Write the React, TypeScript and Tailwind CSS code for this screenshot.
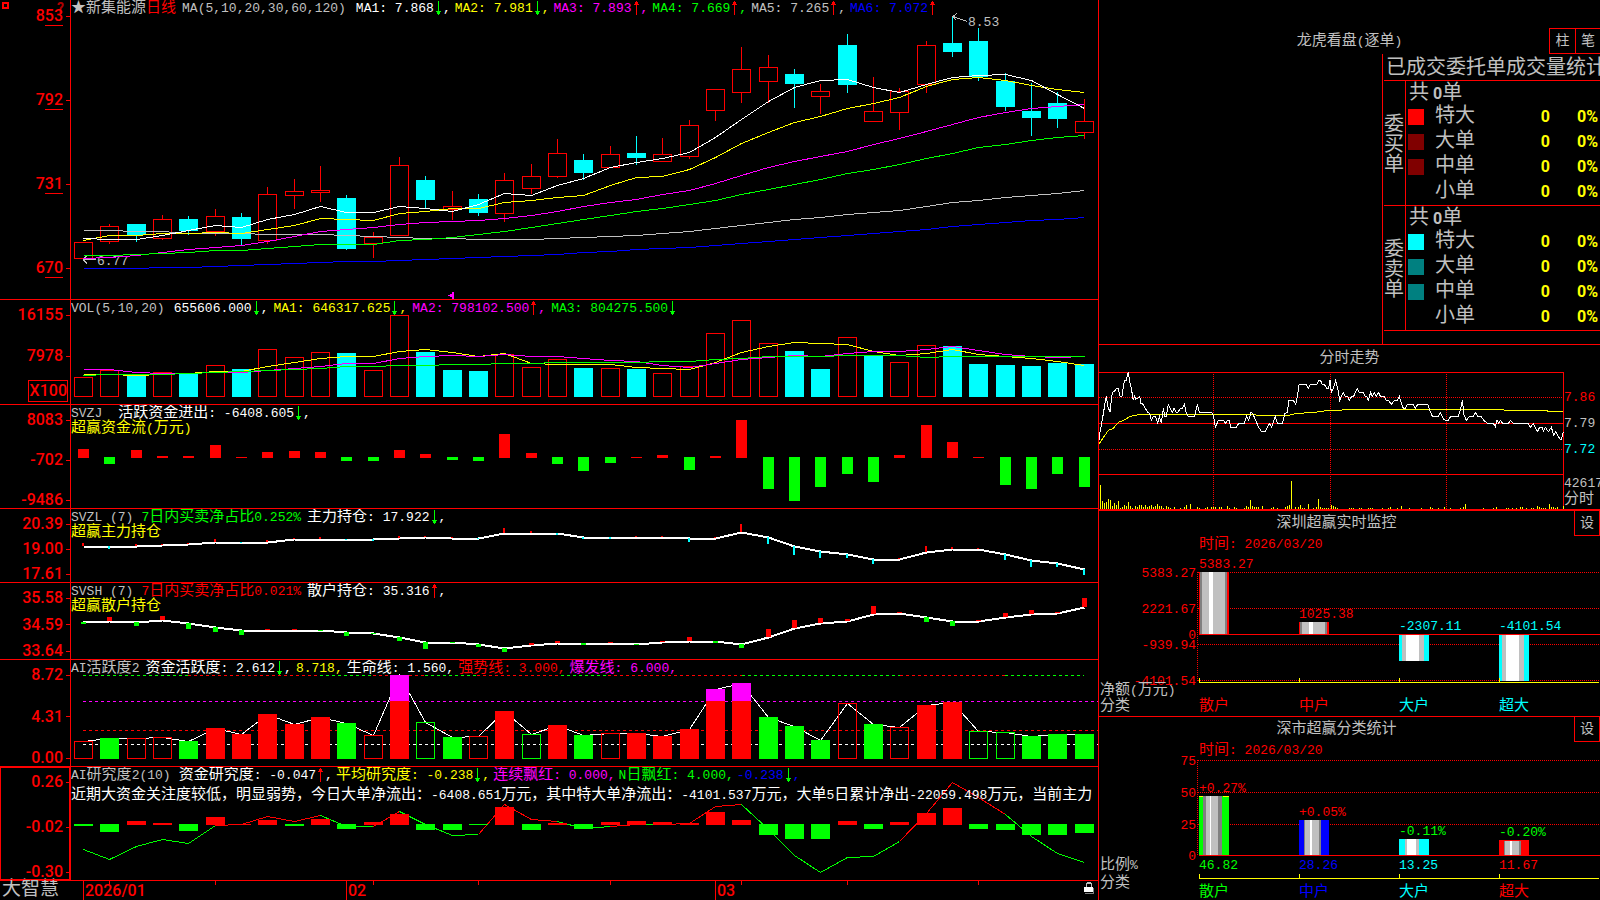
import { Fragment, type ReactNode } from 'react';

const RED = '#ff0000';
const GREEN = '#00ff00';
const CYAN = '#00ffff';
const MAGENTA = '#ff00ff';
const YELLOW = '#ffff00';
const WHITE = '#ffffff';
const SILVER = '#c0c0c0';
const GRAY = '#808080';
const BLUE = '#0000ff';

// x of the bar in the middle of each trading day
const dayX = (i: number) => Math.round(82.9 + i * 26.34);

// [body top, body bottom, high, low, up]
const candles = [
  [242, 258, 242, 258, 1], [226, 241, 224, 244, 1], [224, 235, 224, 242, 0], [219, 238, 215, 240, 1],
  [219, 231, 216, 235, 0], [216, 231, 209, 236, 1], [217, 239, 213, 245, 0], [194, 240, 187, 244, 1],
  [191, 195, 179, 209, 1], [190, 192, 166, 202, 1], [198, 249, 195, 250, 0], [237, 243, 232, 258, 1],
  [165, 235, 157, 235, 1], [180, 200, 176, 209, 0], [206, 209, 191, 220, 1], [199, 213, 194, 216, 0],
  [180, 213, 173, 222, 1], [176, 188, 164, 194, 1], [153, 176, 139, 178, 1], [160, 173, 154, 180, 0],
  [154, 167, 146, 167, 1], [153, 158, 136, 165, 0], [154, 161, 138, 162, 1], [125, 156, 120, 159, 1],
  [89, 110, 89, 121, 1], [69, 92, 47, 103, 1], [67, 81, 55, 103, 1], [74, 84, 69, 108, 0],
  [91, 96, 84, 114, 1], [45, 85, 34, 93, 0], [111, 121, 77, 122, 1], [91, 112, 88, 130, 1],
  [45, 84, 41, 93, 1], [43, 52, 17, 57, 0], [41, 77, 28, 81, 0], [81, 107, 73, 111, 0],
  [111, 118, 83, 136, 0], [103, 119, 92, 128, 0], [121, 132, 99, 139, 1],
];

const priceLines = [
  { color: BLUE, ys: [268, 268, 268, 267, 267, 266, 265, 264, 263, 262, 261, 261, 260, 259, 258, 257, 256, 255, 254, 252, 251, 249, 248, 247, 245, 243, 241, 239, 237, 235, 233, 231, 229, 226, 224, 222, 220, 219, 217] },
  { color: SILVER, ys: [230, 230, 231, 231, 233, 233, 233, 234, 234, 234, 235, 236, 237, 238, 238, 239, 239, 239, 238, 237, 236, 235, 233, 231, 228, 225, 222, 219, 217, 214, 212, 210, 206, 202, 200, 197, 195, 193, 190] },
  { color: MAGENTA, ys: [258, 257, 255, 252, 249, 247, 245, 241, 236, 231, 229, 227, 224, 222, 221, 220, 218, 215, 211, 206, 202, 199, 194, 190, 183, 175, 167, 161, 156, 151, 144, 138, 131, 124, 117, 112, 108, 106, 104] },
  { color: GREEN, ys: [255, 255, 254, 253, 252, 250, 250, 248, 246, 244, 244, 244, 240, 239, 237, 234, 231, 227, 223, 219, 215, 211, 208, 204, 200, 194, 189, 184, 179, 173, 169, 164, 158, 153, 147, 144, 140, 137, 135] },
  { color: YELLOW, ys: [240, 235, 235, 233, 233, 232, 233, 229, 225, 218, 219, 220, 213, 211, 208, 208, 202, 200, 197, 195, 185, 177, 176, 169, 157, 143, 132, 122, 116, 108, 103, 97, 86, 79, 77, 80, 85, 89, 92] },
  { color: WHITE, ys: [238, 239, 239, 235, 230, 225, 227, 219, 214, 206, 212, 212, 206, 208, 211, 204, 193, 195, 185, 178, 167, 162, 158, 152, 137, 119, 101, 87, 80, 79, 87, 92, 84, 77, 75, 74, 80, 94, 108] },
];

const volumes = [377, 370, 375, 372, 373, 365, 369, 349, 357, 352, 353, 370, 315, 352, 370, 371, 354, 367, 359, 368, 368, 369, 373, 366, 333, 320, 343, 351, 369, 337, 356, 362, 345, 346, 364, 365, 366, 363, 364];
const volumeUp = '110101011101100011101011111001011000000';

const volumeLines = [
  { color: YELLOW, ys: [374, 374, 375, 374, 373, 371, 371, 366, 362, 358, 356, 356, 351, 349, 352, 356, 353, 363, 364, 364, 364, 367, 368, 369, 362, 352, 346, 342, 343, 344, 351, 355, 353, 349, 354, 356, 358, 361, 365] },
  { color: MAGENTA, ys: [369, 369, 372, 373, 373, 372, 372, 370, 368, 366, 363, 363, 358, 356, 355, 356, 354, 356, 356, 358, 360, 361, 365, 367, 363, 359, 357, 355, 356, 353, 351, 351, 349, 346, 350, 354, 356, 357, 356] },
  { color: GREEN, ys: [375, 374, 374, 374, 373, 372, 371, 370, 369, 368, 366, 366, 365, 365, 364, 364, 363, 363, 362, 362, 362, 362, 361, 361, 359, 358, 356, 356, 356, 355, 355, 355, 357, 356, 356, 356, 356, 356, 356] },
];

const flows = [449, 464, 450, 456, 456, 445, 457, 452, 451, 452, 461, 461, 450, 454, 460, 461, 434, 453, 464, 471, 463, 457, 455, 470, 456, 420, 489, 501, 487, 474, 482, 455, 425, 442, 457, 485, 489, 474, 487];

const mainHold = [546, 546, 546, 545, 544, 542, 542, 542, 539, 539, 539, 539, 538, 537, 538, 538, 533, 533, 533, 537, 537, 537, 537, 538, 538, 532, 537, 546, 551, 554, 559, 559, 552, 549, 549, 554, 560, 563, 569];
const mainTicks = [543, 549, 544, 544, 543, 539, 542, 540, 538, 537, 540, 541, 536, 536, 537, 539, 528, 531, 535, 539, 539, 536, 536, 542, 537, 524, 544, 555, 558, 558, 564, 558, 546, 547, 548, 560, 567, 567, 575];

const retailHold = [622, 621, 622, 620, 623, 627, 630, 630, 630, 630, 632, 633, 637, 642, 642, 644, 648, 645, 643, 643, 643, 644, 642, 641, 641, 644, 637, 628, 623, 621, 614, 613, 617, 621, 621, 617, 614, 613, 607];
const retailTicks = [624, 617, 626, 616, 629, 632, 635, 629, 629, 631, 636, 634, 641, 649, 643, 647, 652, 643, 641, 645, 642, 645, 641, 637, 643, 648, 629, 620, 618, 619, 606, 612, 622, 626, 620, 613, 610, 612, 598];

const activity = [741, 738, 738, 737, 741, 728, 734, 714, 724, 717, 723, 735, 675, 722, 737, 736, 711, 734, 725, 735, 733, 733, 736, 729, 689, 683, 717, 726, 740, 703, 724, 727, 705, 702, 731, 732, 736, 734, 734];
// R/G filled, r/g hollow, M red with a magenta top
const activityKind = 'rGrrGRRRRRGrMgGrRgRGrRRRMMGGGrGrRRggGGG';
const topDashes: [number, number, string][] = [
  [83, 188, GREEN], [188, 320, RED], [320, 373, GREEN], [373, 425, RED], [425, 477, GREEN], [477, 561, RED],
  [561, 608, GREEN], [608, 742, RED], [742, 900, GREEN], [900, 1005, RED], [1005, 1084, GREEN],
];

const research = [826, 832, 821, 823, 831, 817, 824, 820, 826, 819, 829, 822, 814, 830, 830, 825, 807, 830, 823, 829, 822, 821, 822, 823, 812, 820, 835, 839, 839, 821, 829, 822, 813, 808, 829, 830, 835, 835, 833];
const researchLine = [849, 859, 846, 839, 843, 825, 824, 816, 821, 815, 826, 826, 811, 824, 835, 834, 804, 819, 821, 828, 826, 824, 824, 823, 806, 804, 829, 855, 872, 857, 856, 841, 813, 782, 797, 814, 836, 853, 862];
const researchSeg = 'GGGGGRRRRGGRGGGRRRGGRGRRRGGGGGGRRRRGGG';

const isCjk = /([\u3000-\u9fff\uff00-\uffef★]+)/;

/** Chinese runs at 15px, everything else in the half-width face. */
function Mixed({ children }: { children: string }) {
  return (
    <>
      {children.split(isCjk).map((run, i) =>
        i % 2 ? (
          <span key={i} className="text-[15px]">{run}</span>
        ) : (
          <span key={i} className="text-[13px]">{run}</span>
        )
      )}
    </>
  );
}

function Arrow({ up }: { up: boolean }) {
  return up ? (
    <svg viewBox="0 0 9 15" className="h-[15px] w-[9px] shrink-0" shapeRendering="crispEdges">
      <path d="M4 0h1v14h-1zM3 1h3v2h-3zM2 3h5v1h-5z" fill={RED} />
    </svg>
  ) : (
    <svg viewBox="0 0 9 15" className="h-[15px] w-[9px] shrink-0" shapeRendering="crispEdges">
      <path d="M4 0h1v14h-1zM3 11h3v2h-3zM2 10h5v1h-5z" fill={GREEN} />
    </svg>
  );
}

function Item({ color, text, dir, end = ',' }: { color: string; text: string; dir?: 'up' | 'down'; end?: string }) {
  return (
    <span className={`flex shrink-0 ${color}`}>
      <span><Mixed>{text}</Mixed></span>
      {dir && <Arrow up={dir === 'up'} />}
      <span><Mixed>{end}</Mixed></span>
    </span>
  );
}

function AxisLabel({ text, underline }: { text: string; underline?: boolean }) {
  return (
    <div className="flex h-4 items-center justify-end">
      <span className="relative leading-4">
        {text}
        {underline && <span className="absolute right-0 -bottom-0.5 h-px w-[18px] bg-[#ff0000]" />}
      </span>
      <span className="ml-[3px] h-px w-1 bg-[#ff0000]" />
    </div>
  );
}

type PanelProps = {
  viewBox: string;
  labels?: string[];
  axis?: ReactNode;
  axisClass?: string;
  header: ReactNode;
  children: ReactNode;
};

function Panel({ viewBox, labels, axis, axisClass = 'pt-[7px]', header, children }: PanelProps) {
  return (
    <section className="flex min-h-0 border-b border-[#ff0000]">
      <div className={`relative flex w-[71px] shrink-0 flex-col justify-between border-r border-[#ff0000] font-[Roboto,sans-serif] text-[16px] font-medium text-[#ff0000] ${axisClass}`}>
        {axis ?? labels?.map((l) => <AxisLabel key={l} text={l} />)}
      </div>
      <div className="relative min-w-0 flex-1 overflow-hidden">
        <svg className="absolute inset-0 size-full" viewBox={viewBox} preserveAspectRatio="none" shapeRendering="crispEdges">
          {children}
        </svg>
        <div className="relative pt-px leading-[15px] whitespace-pre">{header}</div>
      </div>
    </section>
  );
}

function DayLine({ ys, color, width = 1 }: { ys: number[]; color: string; width?: number }) {
  const points = ys.map((y, i) => `${dayX(i) + 0.5},${y + 0.5}`).join(' ');
  return <polyline points={points} fill="none" stroke={color} strokeWidth={width} />;
}

function Box({ i, top, bottom, fill, stroke }: { i: number; top: number; bottom: number; fill?: string; stroke?: string }) {
  const x = dayX(i) - 9;
  return fill ? (
    <rect x={x} y={top} width={19} height={bottom - top} fill={fill} />
  ) : (
    <rect x={x + 0.5} y={top + 0.5} width={18} height={bottom - top - 1} fill="none" stroke={stroke} />
  );
}

function PricePanel() {
  return (
    <Panel
      viewBox="71 0 1027 299"
      axisClass="pt-2 pb-[23px]"
      axis={
        <>
          <svg viewBox="0 0 8 8" className="absolute top-0.5 left-0.5 size-2" shapeRendering="crispEdges">
            <path d="M0 0h7v7h-7zM2 2v3h3v-3z" fill={RED} fillRule="evenodd" />
          </svg>
          <span className="absolute top-0 left-[57px] text-[14px] leading-4 font-bold text-[#b00000]">?</span>
          {['853', '792', '731', '670'].map((l) => <AxisLabel key={l} text={l} underline />)}
        </>
      }
      header={
        <div className="flex gap-1 text-[#c0c0c0]">
          <span className="mr-0.5"><Mixed>★新集能源</Mixed><span className="text-[#ff0000]"><Mixed>日线</Mixed></span></span>
          <span className="mr-1.5"><Mixed>MA(5,10,20,30,60,120)</Mixed></span>
          <Item color="text-white" text="MA1: 7.868" dir="down" />
          <Item color="text-[#ffff00]" text="MA2: 7.981" dir="down" />
          <Item color="text-[#ff00ff]" text="MA3: 7.893" dir="up" />
          <Item color="text-[#00ff00]" text="MA4: 7.669" dir="up" />
          <Item color="text-[#c0c0c0]" text="MA5: 7.265" dir="up" />
          <Item color="text-[#0000ff]" text="MA6: 7.072" dir="up" end="" />
        </div>
      }
    >
      {candles.map(([top, bottom, high, low, up], i) => {
        const x = dayX(i);
        const color = up ? RED : CYAN;
        return (
          <g key={i}>
            <path d={`M${x + 0.5} ${high}V${top}M${x + 0.5} ${bottom}V${low}`} stroke={color} />
            <Box i={i} top={top} bottom={bottom + (up ? 1 : 0)} fill={up ? undefined : CYAN} stroke={RED} />
          </g>
        );
      })}
      <text x={97} y={265} fontSize={13} fill={SILVER}>6.77</text>
      <path d="M83 259.5H96M83 259.5l4 -4M83 259.5l4 4" stroke={SILVER} fill="none" />
      {priceLines.map((l) => <DayLine key={l.color} {...l} />)}
      <text x={968} y={26} fontSize={13} fill={SILVER}>8.53</text>
      <path d="M953 16.5L967 21.5M957 13L953 16.5L956 20" stroke={SILVER} fill="none" />
      <path d="M454 292v7h-2v-2h-2v-1h-2v-1h2v-1h2v-2z" fill={MAGENTA} />
    </Panel>
  );
}

function VolumePanel() {
  return (
    <Panel
      viewBox="71 300 1027 104"
      axis={
        <>
          <AxisLabel text="16155" />
          <div className="mt-[25px] mb-auto"><AxisLabel text="7978" /></div>
          <div className="mr-0.5 mb-0.5 flex h-[22px] w-10 items-center justify-end self-end border border-[#ff0000]">X100</div>
        </>
      }
      header={
        <div className="flex gap-[5px] text-[#c0c0c0]">
          <span className="mr-1"><Mixed>VOL(5,10,20)</Mixed></span>
          <Item color="text-white" text="655606.000" dir="down" />
          <Item color="text-[#ffff00]" text="MA1: 646317.625" dir="down" />
          <Item color="text-[#ff00ff]" text="MA2: 798102.500" dir="up" />
          <Item color="text-[#00ff00]" text="MA3: 804275.500" dir="down" end="" />
        </div>
      }
    >
      {volumes.map((top, i) => (
        <Box key={i} i={i} top={top} bottom={397} fill={volumeUp[i] === '1' ? undefined : CYAN} stroke={RED} />
      ))}
      {volumeLines.map((l) => <DayLine key={l.color} {...l} />)}
    </Panel>
  );
}

function FlowPanel() {
  return (
    <Panel
      viewBox="71 405 1027 103"
      labels={['8083', '-702', '-9486']}
      header={
        <>
          <div className="flex gap-4 text-[#c0c0c0]">
            <span><Mixed>SVZJ</Mixed></span>
            <Item color="text-white" text="活跃资金进出: -6408.605" dir="down" />
          </div>
          <div className="text-[#ffff00]"><Mixed>超赢资金流(万元)</Mixed></div>
        </>
      }
    >
      {flows.map((y, i) =>
        y < 458 ? (
          <rect key={i} x={dayX(i) - 5} y={y} width={11} height={458 - y} fill={RED} />
        ) : (
          <rect key={i} x={dayX(i) - 5} y={457} width={11} height={y - 457} fill={GREEN} />
        )
      )}
    </Panel>
  );
}

type HoldProps = {
  viewBox: string;
  labels: string[];
  code: string;
  ratio: ReactNode;
  item: ReactNode;
  caption: string;
  line: number[];
  ticks: number[];
  tickWidth: number;
  down: string;
};

function HoldPanel({ viewBox, labels, code, ratio, item, caption, line, ticks, tickWidth, down }: HoldProps) {
  return (
    <Panel
      viewBox={viewBox}
      labels={labels}
      header={
        <>
          <div className="flex gap-1.5 text-[#c0c0c0]">
            <span className="mr-0.5"><Mixed>{code}</Mixed></span>
            {ratio}
            {item}
          </div>
          <div className="text-[#ffff00]"><Mixed>{caption}</Mixed></div>
        </>
      }
    >
      <DayLine ys={line} color={WHITE} width={2} />
      {ticks.map((y, i) => (
        <rect
          key={i}
          x={dayX(i) - Math.floor(tickWidth / 2)}
          y={Math.min(y, line[i])}
          width={tickWidth}
          height={Math.max(1, Math.abs(y - line[i]))}
          fill={y < line[i] ? RED : down}
        />
      ))}
    </Panel>
  );
}

function ActivityPanel() {
  return (
    <Panel
      viewBox="71 660 1027 106"
      labels={['8.72', '4.31', '0.00']}
      header={
        <div className="flex gap-1 text-[#c0c0c0]">
          <span className="mr-0.5"><Mixed>AI活跃度2</Mixed></span>
          <Item color="text-white" text="资金活跃度: 2.612" dir="down" />
          <Item color="text-[#ffff00]" text="8.718" />
          <Item color="text-white" text="生命线: 1.560" />
          <Item color="text-[#ff0000]" text="强势线: 3.000" />
          <Item color="text-[#ff00ff]" text="爆发线: 6.000" />
        </div>
      }
    >
      {topDashes.map(([a, b, c]) => (
        <path key={a} d={`M${a} 675.5H${b}`} stroke={c} strokeDasharray="3 3" />
      ))}
      <path d="M83 701.5H1098" stroke={MAGENTA} strokeDasharray="3 3" />
      <path d="M83 730.5H1098" stroke={RED} strokeDasharray="3 3" />
      <path d="M83 744.5H1098" stroke={WHITE} strokeDasharray="3 3" />
      <DayLine ys={activity} color={WHITE} />
      {activity.map((top, i) => {
        const kind = activityKind[i];
        if (kind === 'r' || kind === 'g') {
          return <Box key={i} i={i} top={top} bottom={759} stroke={kind === 'r' ? RED : GREEN} />;
        }
        return (
          <Fragment key={i}>
            <Box i={i} top={top} bottom={759} fill={kind === 'G' ? GREEN : RED} />
            {kind === 'M' && <Box i={i} top={top} bottom={701} fill={MAGENTA} />}
          </Fragment>
        );
      })}
    </Panel>
  );
}

function ResearchPanel() {
  return (
    <Panel
      viewBox="71 767 1027 113"
      labels={['0.26', '-0.02', '-0.30']}
      axisClass="pt-[7px] shadow-[inset_0_0_0_1px_#ff0000]"
      header={
        <>
          <div className="flex gap-[3px] text-[#c0c0c0]">
            <span className="mr-[5px]"><Mixed>AI研究度2(10)</Mixed></span>
            <Item color="text-white" text="资金研究度: -0.047" dir="up" />
            <Item color="text-[#ffff00]" text="平均研究度: -0.238" dir="down" />
            <Item color="text-[#ff00ff]" text="连续飘红: 0.000" />
            <Item color="text-[#00ff00]" text="N日飘红: 4.000" />
            <Item color="text-[#0000ff]" text="-0.238" dir="down" />
          </div>
          <p className="mt-[5px] text-white">
            <Mixed>近期大资金关注度较低，明显弱势，今日大单净流出：-6408.651万元，其中特大单净流出：-4101.537万元，大单5日累计净出-22059.498万元，当前主力</Mixed>
          </p>
        </>
      }
    >
      {researchSeg.split('').map((c, i) => (
        <path
          key={i}
          d={`M${dayX(i) + 0.5} ${researchLine[i] + 0.5}L${dayX(i + 1) + 0.5} ${researchLine[i + 1] + 0.5}`}
          stroke={c === 'R' ? RED : GREEN}
        />
      ))}
      {research.map((y, i) =>
        y < 825 ? (
          <Box key={i} i={i} top={y} bottom={825} fill={RED} />
        ) : (
          <Box key={i} i={i} top={824} bottom={Math.max(y, 825)} fill={GREEN} />
        )
      )}
    </Panel>
  );
}

function DateAxis() {
  return (
    <div className="flex min-h-0 text-[#c0c0c0]">
      <div className="w-[71px] shrink-0 pl-0.5 text-[19px] leading-[19px] whitespace-nowrap">大智慧</div>
      <div className="relative flex-1">
        <svg className="absolute inset-0 size-full" viewBox="71 881 1027 19" preserveAspectRatio="none" shapeRendering="crispEdges">
          {[0, 10, 24].map((i) => <rect key={i} x={dayX(i)} y={881} width={1} height={19} fill={RED} />)}
          {[1, 5, 11, 15, 20, 25, 29, 34].map((i) => <rect key={i} x={dayX(i)} y={881} width={1} height={4} fill={RED} />)}
        </svg>
        {/* column shares follow the day positions of the month ticks */}
        <div className="relative grid h-full grid-cols-[14fr_263fr_369fr_381fr] font-[Roboto,sans-serif] text-[16px] leading-[19px] font-medium text-[#ff0000]">
          <span />
          <span>2026/01</span>
          <span>02</span>
          <span className="flex justify-between">
            03
            <svg viewBox="0 0 10 12" className="mt-px mr-1 h-3 w-2.5" shapeRendering="crispEdges">
              <path d="M2 5V1h1V0h4v1h1v4h-1V2H3v3z" fill={SILVER} />
              <path d="M9 6h1v6H1v-1h8z" fill={GRAY} />
              <path d="M0 5h9v5H0z" fill={WHITE} />
            </svg>
          </span>
        </div>
      </div>
    </div>
  );
}

function Square({ color }: { color: string }) {
  return <span className={`block size-4 ${color}`} />;
}

function OrderTable({ side, swatches }: { side: string[]; swatches: string[] }) {
  return (
    <div className="flex h-[125px] border-b border-[#ff0000]">
      <div className="flex w-[22px] flex-col justify-center border-r border-[#ff0000] pt-1.5 leading-5">
        {side.map((c) => <span key={c}>{c}</span>)}
      </div>
      <table className="flex-1 self-start">
        <caption className="h-[23px] pl-[3px] text-left leading-[25px]">
          共<span className="ml-1 font-[Roboto,sans-serif] text-[16px] font-bold">0</span>单
        </caption>
        <tbody>
          {['特大', '大单', '中单', '小单'].map((name, i) => (
            <tr key={name} className="h-[25px] leading-[25px]">
              <td className="w-[29px] pl-0.5"><Square color={swatches[i]} /></td>
              <th className="w-10 text-left font-normal whitespace-nowrap" scope="row">{name}</th>
              <td className="text-right font-[Roboto,sans-serif] text-[16px] font-bold text-[#ffff00]">0</td>
              <td className="w-[50px] pr-0.5 text-right font-[Roboto,sans-serif] text-[16px] font-bold text-[#ffff00]">0%</td>
            </tr>
          ))}
        </tbody>
      </table>
    </div>
  );
}

function OrdersPanel() {
  return (
    <section className="flex min-h-0 flex-col border-b border-[#ff0000]">
      <div className="mt-7 grid h-[26px] shrink-0 grid-cols-[1fr_auto_1fr]">
        <h2 className="col-start-2 leading-[28px]"><Mixed>龙虎看盘(逐单)</Mixed></h2>
        <div className="flex justify-self-end text-[14px]">
          <button className="h-[26px] w-[26px] border border-r-0 border-[#ff0000]">柱</button>
          <button className="h-[26px] w-[25px] border border-r-0 border-[#ff0000]">笔</button>
        </div>
      </div>
      <div className="w-[218px] flex-1 self-end overflow-hidden border-l border-[#ff0000] pl-px text-[20px]">
        <h3 className="h-[27px] border-b border-[#ff0000] pl-0.5 leading-[29px] whitespace-nowrap">已成交委托单成交量统计</h3>
        <OrderTable side={['委', '买', '单']} swatches={['bg-[#ff0000]', 'bg-[#800000]', 'bg-[#800000]', 'bg-black']} />
        <OrderTable side={['委', '卖', '单']} swatches={['bg-[#00ffff]', 'bg-[#008080]', 'bg-[#008080]', 'bg-black']} />
      </div>
    </section>
  );
}

// intraday curve, three units to a pixel
const intraday =
  '27,315 30,290 35,265 41,230 45,205 49,184 54,215 60,232 64,195 67,172 73,170 79,160 85,160 90,184 96,184 100,155 103,137 108,137 115,112 119,140 124,160 130,196 134,184 137,193 143,190 149,184 153,205 160,208 166,220 173,232 179,235 184,256 190,244 196,244 203,265 208,244 214,265 220,220 224,244 229,244 235,208 241,220 247,232 252,220 259,232 264,232 271,220 277,220 283,208 289,235 295,244 314,244 322,208 328,232 365,232 371,245 376,277 385,256 401,256 407,265 413,256 418,256 422,277 439,277 446,265 463,265 470,244 476,256 483,232 488,235 497,256 505,275 515,290 526,290 538,265 545,277 556,244 562,265 577,265 585,235 592,232 597,196 610,196 617,208 622,184 627,150 649,148 655,160 661,148 680,148 686,136 692,137 697,148 703,148 711,160 716,160 720,136 724,172 730,160 737,137 743,160 749,196 760,172 766,184 773,184 778,196 785,184 791,184 802,160 808,172 820,172 826,184 830,184 835,196 842,172 847,184 853,172 859,184 866,172 871,184 883,184 888,196 895,196 904,208 913,196 922,196 928,184 934,205 940,220 946,220 952,208 970,208 976,220 983,208 1013,208 1019,225 1027,244 1045,244 1051,232 1061,253 1068,256 1075,256 1082,244 1105,244 1111,225 1117,196 1122,240 1129,256 1138,244 1150,244 1157,232 1163,244 1173,244 1181,256 1193,265 1210,265 1216,275 1221,256 1226,265 1232,256 1238,265 1255,265 1262,256 1270,265 1314,265 1322,277 1330,265 1342,290 1349,277 1356,277 1360,288 1366,277 1375,290 1384,277 1391,300 1397,290 1410,313 1414,313 1420,291';
const average =
  '27,327 40,308 55,286 70,280 85,262 100,257 120,244 145,239 490,239 505,241 598,241 615,236 680,231 715,226 800,224 1240,224 1245,226 1368,226 1375,229 1420,230';
const ticks = [
  [31, 450], [37, 498], [43, 504], [49, 501], [55, 492], [61, 495], [67, 513], [73, 504], [79, 510], [85, 498], [91, 518],
  [97, 516], [103, 510], [109, 513], [115, 501], [121, 513], [127, 518], [136, 513], [142, 516], [148, 510], [154, 510],
  [160, 516], [166, 510], [172, 516], [178, 513], [184, 510], [190, 516], [196, 513], [202, 507], [208, 513], [214, 513],
  [220, 518], [229, 513], [235, 516], [241, 518], [253, 516], [271, 518], [283, 516], [289, 510], [301, 507], [322, 516],
  [328, 518], [346, 518], [352, 516], [364, 516], [370, 516], [376, 516], [388, 516], [394, 516], [412, 513], [418, 518],
  [433, 516], [439, 518], [463, 518], [469, 513], [475, 516], [481, 495], [487, 513], [493, 516], [499, 516], [505, 516],
  [517, 513], [544, 518], [550, 516], [562, 518], [586, 516], [592, 513], [598, 510], [604, 438], [616, 516], [625, 516],
  [631, 510], [637, 518], [643, 518], [655, 507], [670, 518], [679, 516], [685, 492], [691, 516], [697, 518], [703, 518],
  [709, 518], [715, 518], [724, 510], [730, 513], [736, 516], [742, 518], [778, 518], [784, 518], [790, 518], [808, 518],
  [814, 518], [835, 518], [841, 518], [847, 518], [877, 518], [895, 518], [901, 516], [922, 518], [934, 513], [958, 518],
  [994, 518], [1021, 516], [1027, 518], [1045, 518], [1063, 516], [1081, 518], [1111, 518], [1120, 516], [1126, 507],
  [1180, 518], [1210, 518], [1218, 516], [1249, 518], [1255, 518], [1267, 518], [1279, 518], [1291, 516], [1297, 516],
  [1309, 518], [1324, 518], [1330, 518], [1342, 513], [1348, 516], [1354, 518], [1360, 518], [1366, 518], [1378, 507],
  [1384, 516], [1390, 516], [1396, 518], [1402, 516], [1420, 513],
];

function IntradayPanel() {
  return (
    <section className="flex min-h-0 flex-col border-b-2 border-[#ff0000]">
      <h2 className="h-[27px] shrink-0 text-center text-[15px] leading-[27px]">分时走势</h2>
      <div className="flex min-h-0 flex-1">
        <svg className="h-full min-w-0 flex-1" viewBox="27 111 1395 411" preserveAspectRatio="none" shapeRendering="crispEdges" strokeWidth={3} fill="none">
          <path d="M27 112.5H1422M27 265.5H1422M27 418.5H1422M1420.5 111V522" stroke={RED} />
          <path d="M27 187.5H1422M27 343.5H1422M370.5 111V522M721.5 111V522M1069.5 111V522" stroke={RED} strokeDasharray="3 3" />
          <polyline points={average} stroke={YELLOW} />
          <polyline points={intraday} stroke={WHITE} />
          {ticks.map(([x, y]) => <path key={x} d={`M${x + 0.5} ${y}V522`} stroke={YELLOW} />)}
        </svg>
        <div className="w-9 shrink-0 overflow-hidden pt-[18px] leading-4 whitespace-nowrap">
          <div className="mb-2.5 text-[#ff0000]"><Mixed>7.86</Mixed></div>
          <div className="mb-2.5"><Mixed>7.79</Mixed></div>
          <div className="mb-[18px] text-[#00ffff]"><Mixed>7.72</Mixed></div>
          <div><Mixed>42617</Mixed></div>
          <div><Mixed>分时</Mixed></div>
        </div>
      </div>
    </section>
  );
}

function SectionHead({ title }: { title: string }) {
  return (
    <div className="flex h-[25px] shrink-0">
      <h2 className="flex-1 text-center text-[15px] leading-[25px]">{title}</h2>
      <button className="w-[26px] border border-t-0 border-[#ff0000] text-[14px] leading-6">设</button>
    </div>
  );
}

/** Stripes of a shaded column: [start, end, color] inside its 30px. */
type Stripe = [number, number, string];

function Column({ x, top, bottom, base, stripes }: { x: number; top: number; bottom: number; base: string; stripes: Stripe[] }) {
  return (
    <>
      <rect x={x} y={top} width={30} height={bottom - top} fill={base} />
      {stripes.map(([a, b, c]) => <rect key={a} x={x + a} y={top} width={b - a} height={bottom - top} fill={c} />)}
    </>
  );
}

function Num({ x, y, fill, end, children }: { x: number; y: number; fill: string; end?: boolean; children: string }) {
  return (
    <text x={x} y={y + 4} fill={fill} fontSize={13} textAnchor={end ? 'end' : 'start'}>
      {children.split(isCjk).map((run, i) => <tspan key={i} fontSize={i % 2 ? 15 : 13}>{run}</tspan>)}
    </text>
  );
}

const redShade: Stripe[] = [[1, 3, GRAY], [3, 10, SILVER], [10, 14, WHITE], [14, 26, SILVER], [26, 28, GRAY]];
const cyanShade: Stripe[] = [[3, 7, SILVER], [7, 20, WHITE], [20, 25, SILVER]];

function MonitorPanel() {
  return (
    <section className="flex min-h-0 flex-col border-b border-[#ff0000]">
      <SectionHead title="深圳超赢实时监控" />
      <svg className="min-h-0 w-full flex-1" viewBox="1099 536 501 180" shapeRendering="crispEdges">
        <path d="M1197.5 572V681M1198 572.5H1600M1198 608.5H1600M1198 644.5H1600M1198 680.5H1600" stroke={RED} strokeDasharray="1 1" />
        <Column x={1199} top={572} bottom={634} base={RED} stripes={redShade} />
        <Column x={1299} top={622} bottom={634} base={RED} stripes={redShade} />
        <Column x={1399} top={635} bottom={661} base={CYAN} stripes={cyanShade} />
        <Column x={1499} top={635} bottom={681} base={CYAN} stripes={cyanShade} />
        <path d="M1199 634.5H1600" stroke={RED} />
        <path d="M1199 682.5H1599M1199.5 678V682M1299.5 678V682M1399.5 678V682M1499.5 678V682" stroke={YELLOW} />
        <Num x={1199} y={544} fill={RED}>时间: 2026/03/20</Num>
        <Num x={1199} y={564} fill={RED}>5383.27</Num>
        <Num x={1299} y={614} fill={RED}>1025.38</Num>
        <Num x={1399} y={626} fill={CYAN}>-2307.11</Num>
        <Num x={1499} y={626} fill={CYAN}>-4101.54</Num>
        <Num x={1196} y={573} fill={RED} end>5383.27</Num>
        <Num x={1196} y={609} fill={RED} end>2221.67</Num>
        <Num x={1196} y={635} fill={RED} end>0</Num>
        <Num x={1196} y={645} fill={RED} end>-939.94</Num>
        <Num x={1196} y={681} fill={RED} end>-4101.54</Num>
        <Num x={1100} y={690} fill={SILVER}>净额(万元)</Num>
        <Num x={1100} y={706} fill={SILVER}>分类</Num>
        <Num x={1199} y={706} fill={RED}>散户</Num>
        <Num x={1299} y={706} fill={RED}>中户</Num>
        <Num x={1399} y={706} fill={CYAN}>大户</Num>
        <Num x={1499} y={706} fill={CYAN}>超大</Num>
      </svg>
    </section>
  );
}

const groups: { x: number; top: number; name: string; value: string; change: string; changeY: number; color: string; changeColor: string; stripes: Stripe[] }[] = [
  { x: 1199, top: 796, name: '散户', value: '46.82', change: '+0.27%', changeY: 788, color: GREEN, changeColor: RED, stripes: [[4, 7, GRAY], [7, 11, SILVER], [11, 12, WHITE], [12, 19, SILVER], [19, 23, GRAY]] },
  { x: 1299, top: 820, name: '中户', value: '28.26', change: '+0.05%', changeY: 812, color: BLUE, changeColor: RED, stripes: [[5, 6, GRAY], [6, 11, SILVER], [11, 13, WHITE], [13, 20, SILVER], [20, 22, GRAY]] },
  { x: 1399, top: 839, name: '大户', value: '13.25', change: '-0.11%', changeY: 831, color: CYAN, changeColor: GREEN, stripes: [[6, 8, SILVER], [8, 17, WHITE], [17, 20, SILVER]] },
  { x: 1499, top: 840, name: '超大', value: '11.67', change: '-0.20%', changeY: 832, color: RED, changeColor: GREEN, stripes: [[5, 6, GRAY], [6, 11, SILVER], [11, 13, WHITE], [13, 20, SILVER], [20, 22, GRAY]] },
];

function CategoryPanel() {
  return (
    <section className="flex min-h-0 flex-col">
      <SectionHead title="深市超赢分类统计" />
      <svg className="min-h-0 w-full flex-1" viewBox="1099 742 501 158" shapeRendering="crispEdges">
        <path d="M1197.5 760V855M1198 760.5H1600M1198 792.5H1600M1198 824.5H1600" stroke={RED} strokeDasharray="1 1" />
        {groups.map((g) => (
          <g key={g.x}>
            <Column x={g.x} top={g.top} bottom={855} base={g.color} stripes={g.stripes} />
            <Num x={g.x} y={g.changeY} fill={g.changeColor}>{g.change}</Num>
            <Num x={g.x} y={865} fill={g.color}>{g.value}</Num>
            <Num x={g.x} y={892} fill={g.color}>{g.name}</Num>
          </g>
        ))}
        <path d="M1199 796.5H1203M1223 796.5H1229" stroke={YELLOW} />
        <path d="M1504 840.5H1521" stroke={RED} />
        <path d="M1199 855.5H1600" stroke={RED} />
        <path d="M1199 878.5H1599M1199.5 874V878M1299.5 874V878M1399.5 874V878M1499.5 874V878" stroke={YELLOW} />
        <Num x={1199} y={750} fill={RED}>时间: 2026/03/20</Num>
        <Num x={1196} y={761} fill={RED} end>75</Num>
        <Num x={1196} y={793} fill={RED} end>50</Num>
        <Num x={1196} y={825} fill={RED} end>25</Num>
        <Num x={1196} y={856} fill={RED} end>0</Num>
        <Num x={1100} y={865} fill={SILVER}>比例%</Num>
        <Num x={1100} y={883} fill={SILVER}>分类</Num>
      </svg>
    </section>
  );
}

export default function App() {
  return (
    <div className="flex h-screen min-h-[720px] overflow-hidden bg-black font-['Liberation_Mono','Noto_Sans_CJK_SC',monospace] text-[15px] text-[#c0c0c0]">
      <main className="grid min-w-0 flex-1 grid-rows-[300fr_105fr_104fr_74fr_77fr_107fr_114fr_19fr] border-r border-[#ff0000]">
        <PricePanel />
        <VolumePanel />
        <FlowPanel />
        <HoldPanel
          viewBox="71 509 1027 73"
          labels={['20.39', '19.00', '17.61']}
          code="SVZL (7)"
          ratio={<span className="text-[#00ff00]"><Mixed>7日内买卖净占比0.252%</Mixed></span>}
          item={<Item color="text-white" text="主力持仓: 17.922" dir="down" />}
          caption="超赢主力持仓"
          line={mainHold}
          ticks={mainTicks}
          tickWidth={2}
          down={CYAN}
        />
        <HoldPanel
          viewBox="71 583 1027 76"
          labels={['35.58', '34.59', '33.64']}
          code="SVSH (7)"
          ratio={<span className="text-[#ff0000]"><Mixed>7日内买卖净占比0.021%</Mixed></span>}
          item={<Item color="text-white" text="散户持仓: 35.316" dir="up" />}
          caption="超赢散户持仓"
          line={retailHold}
          ticks={retailTicks}
          tickWidth={5}
          down={GREEN}
        />
        <ActivityPanel />
        <ResearchPanel />
        <DateAxis />
      </main>
      <aside className="grid w-[501px] shrink-0 grid-rows-[345fr_166fr_206fr_183fr]">
        <OrdersPanel />
        <IntradayPanel />
        <MonitorPanel />
        <CategoryPanel />
      </aside>
    </div>
  );
}
